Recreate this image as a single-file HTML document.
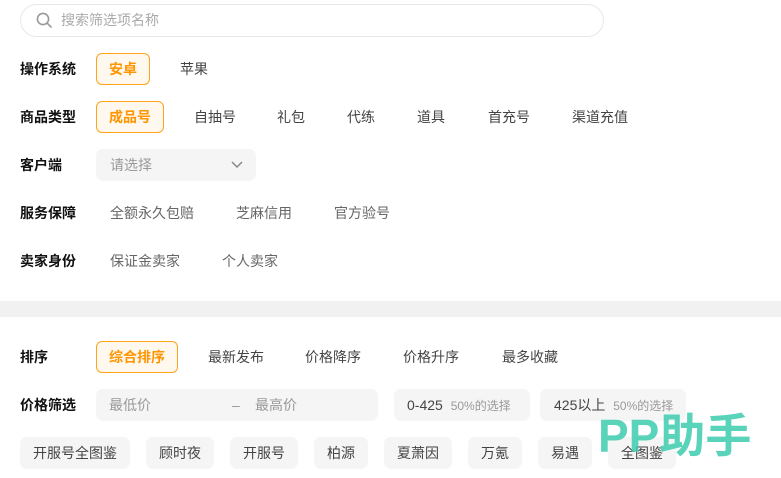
<!DOCTYPE html>
<html><head><meta charset="utf-8"><style>
*{margin:0;padding:0;box-sizing:border-box}
body{width:781px;height:478px;position:relative;background:#fff;overflow:hidden;font-family:"Liberation Sans","Noto Sans CJK SC",sans-serif;font-size:14px;color:#333}
.a{position:absolute;white-space:nowrap;line-height:20px}
.l{font-weight:bold;color:#111;left:20px}
.o{color:#444}
.g{color:#666}
.sel{position:absolute;border:1px solid #ffa41b;background:#fff8ee;color:#ff9500;font-weight:bold;border-radius:6px;height:32px;line-height:30px;text-align:center}
.box{position:absolute;background:#f5f5f5;border-radius:7px}
.tag{position:absolute;top:437px;height:32px;line-height:32px;background:#f5f5f5;border-radius:7px;text-align:center;color:#444}
</style></head><body>
<div style="position:absolute;left:20px;top:4px;width:584px;height:33px;border:1px solid #e6e6e6;border-radius:17px"></div>
<svg style="position:absolute;left:36px;top:12px" width="17" height="17" viewBox="0 0 17 17"><circle cx="7" cy="7" r="5.6" fill="none" stroke="#999" stroke-width="1.6"/><line x1="11.2" y1="11.2" x2="15" y2="15" stroke="#999" stroke-width="1.6" stroke-linecap="round"/></svg>
<span class="a" style="left:61px;top:10px;color:#aaa">搜索筛选项名称</span>

<span class="a l" style="top:59px">操作系统</span>
<div class="sel" style="left:96px;top:53px;width:54px">安卓</div>
<span class="a o" style="left:180px;top:59px">苹果</span>

<span class="a l" style="top:107px">商品类型</span>
<div class="sel" style="left:96px;top:101px;width:68px">成品号</div>
<span class="a o" style="left:194px;top:107px">自抽号</span>
<span class="a o" style="left:277px;top:107px">礼包</span>
<span class="a o" style="left:347px;top:107px">代练</span>
<span class="a o" style="left:417px;top:107px">道具</span>
<span class="a o" style="left:488px;top:107px">首充号</span>
<span class="a o" style="left:572px;top:107px">渠道充值</span>

<span class="a l" style="top:155px">客户端</span>
<div class="box" style="left:96px;top:149px;width:160px;height:32px"></div>
<span class="a" style="left:110px;top:155px;color:#999">请选择</span>
<svg style="position:absolute;left:230px;top:160px" width="14" height="10" viewBox="0 0 14 10"><polyline points="2,2 7,7 12,2" fill="none" stroke="#888" stroke-width="1.5"/></svg>

<span class="a l" style="top:203px">服务保障</span>
<span class="a g" style="left:110px;top:203px">全额永久包赔</span>
<span class="a g" style="left:236px;top:203px">芝麻信用</span>
<span class="a g" style="left:334px;top:203px">官方验号</span>

<span class="a l" style="top:251px">卖家身份</span>
<span class="a g" style="left:110px;top:251px">保证金卖家</span>
<span class="a g" style="left:222px;top:251px">个人卖家</span>

<div style="position:absolute;left:0;top:301px;width:781px;height:16px;background:#f1f1f1"></div>

<span class="a l" style="top:347px">排序</span>
<div class="sel" style="left:96px;top:341px;width:82px">综合排序</div>
<span class="a o" style="left:208px;top:347px">最新发布</span>
<span class="a o" style="left:305px;top:347px">价格降序</span>
<span class="a o" style="left:403px;top:347px">价格升序</span>
<span class="a o" style="left:502px;top:347px">最多收藏</span>

<span class="a l" style="top:395px">价格筛选</span>
<div class="box" style="left:96px;top:389px;width:282px;height:32px"></div>
<span class="a" style="left:109px;top:395px;color:#999">最低价</span>
<span class="a" style="left:232px;top:395px;color:#999">–</span>
<span class="a" style="left:255px;top:395px;color:#999">最高价</span>
<div class="box" style="left:394px;top:389px;width:136px;height:32px"></div>
<span class="a o" style="left:407px;top:395px">0-425 <span style="font-size:12px;color:#999;margin-left:4px">50%的选择</span></span>
<div class="box" style="left:540px;top:389px;width:146px;height:32px"></div>
<span class="a o" style="left:554px;top:395px">425以上 <span style="font-size:12px;color:#999;margin-left:4px">50%的选择</span></span>

<div class="tag" style="left:20px;width:110px">开服号全图鉴</div>
<div class="tag" style="left:146px;width:68px">顾时夜</div>
<div class="tag" style="left:230px;width:68px">开服号</div>
<div class="tag" style="left:314px;width:54px">柏源</div>
<div class="tag" style="left:384px;width:68px">夏萧因</div>
<div class="tag" style="left:468px;width:54px">万氪</div>
<div class="tag" style="left:538px;width:54px">易遇</div>
<div class="tag" style="left:608px;width:68px">全图鉴</div>

<span class="a" style="left:598px;top:410px;line-height:52px;font-size:46px;font-weight:bold;color:rgba(60,205,175,0.85);letter-spacing:0px">PP助手</span>
</body></html>
